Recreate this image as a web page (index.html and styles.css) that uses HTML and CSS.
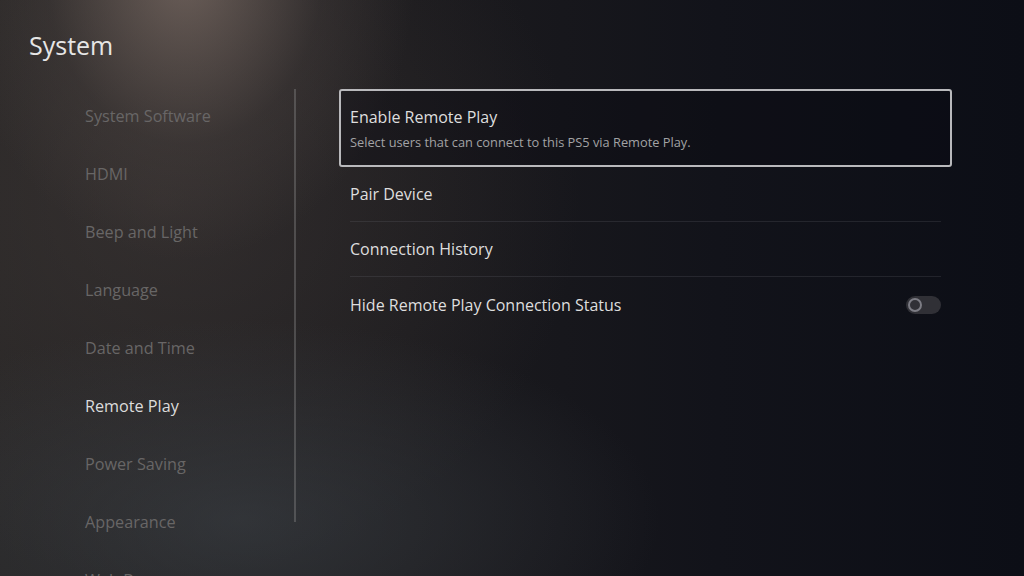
FILE: index.html
```html
<!DOCTYPE html>
<html lang="en">
<head>
  <meta charset="UTF-8">
  <title>System - Remote Play</title>
  <link rel="stylesheet" href="styles.css">
</head>
<body>

  <h1 class="page-title">System</h1>

  <div class="layout">
    <nav class="sidebar">
      <ul class="side-list">
        <li>System Software</li>
        <li>HDMI</li>
        <li>Beep and Light</li>
        <li>Language</li>
        <li>Date and Time</li>
        <li class="active">Remote Play</li>
        <li>Power Saving</li>
        <li>Appearance</li>
        <li>Web Browser</li>
      </ul>
    </nav>

    <section class="panel">
      <div class="option focused">
        <div class="option-title">Enable Remote Play</div>
        <div class="option-desc">Select users that can connect to this PS5 via Remote Play.</div>
      </div>
      <div class="row">Pair Device</div>
      <div class="row">Connection History</div>
      <div class="row last">
        <span>Hide Remote Play Connection Status</span>
        <span class="toggle"><span class="knob"></span></span>
      </div>
    </section>
  </div>

</body>
</html>
```

FILE: styles.css
```css
* {
  box-sizing: border-box;
}

html, body {
  margin: 0;
  padding: 0;
  height: 100%;
  overflow: hidden;
}

body {
  font-family: 'Open Sans', sans-serif;
  color: #dedede;
  background:
    radial-gradient(ellipse 230px 290px at 185px -30px, rgba(130, 114, 106, 0.75), rgba(90, 80, 76, 0.25) 60%, transparent 100%),
    radial-gradient(ellipse 420px 200px at 240px 520px, rgba(62, 68, 74, 0.55), transparent 100%),
    radial-gradient(ellipse 420px 380px at 160px 200px, rgba(70, 62, 60, 0.45), transparent 100%),
    linear-gradient(90deg, #272525 0%, #1c1b1e 40%, #12131a 70%, #0c0e16 100%);
}

.page-title {
  margin: 0;
  padding: 28px 0 0 29px;
  height: 89px;
  font-size: 25px;
  font-weight: 400;
  line-height: 34px;
  color: #e6e6e6;
}

.layout {
  display: flex;
}

.sidebar {
  flex: 0 0 296px;
  height: 433px;
  border-right: 2px solid rgba(150, 150, 150, 0.35);
}

.side-list {
  list-style: none;
  margin: -2px 0 0 0;
  padding: 0 0 0 85px;
}

.side-list li {
  height: 58px;
  line-height: 58px;
  font-size: 16.2px;
  color: #686666;
  white-space: nowrap;
}

.side-list li.active {
  color: #dcdcdc;
}

.panel {
  margin-left: 43px;
  width: 613px;
}

.option {
  height: 78px;
  padding: 14px 0 0 9px;
  border: 2px solid #b9b9bc;
  border-radius: 3px;
  background: rgba(10, 10, 16, 0.35);
}

.option-title {
  font-size: 16px;
  line-height: 24px;
}

.option-desc {
  margin-top: 4px;
  font-size: 12.8px;
  line-height: 18px;
  color: #a2a2a4;
}

.row {
  display: flex;
  align-items: center;
  justify-content: space-between;
  height: 55px;
  margin: 0 11px;
  font-size: 16px;
  border-bottom: 1px solid rgba(110, 110, 120, 0.22);
}

.row.last {
  border-bottom: none;
}

.toggle {
  position: relative;
  width: 35px;
  height: 18px;
  border-radius: 9px;
  background: #303036;
}

.knob {
  position: absolute;
  left: 2px;
  top: 2px;
  width: 14px;
  height: 14px;
  border-radius: 50%;
  border: 2px solid #7c7c84;
}
```
